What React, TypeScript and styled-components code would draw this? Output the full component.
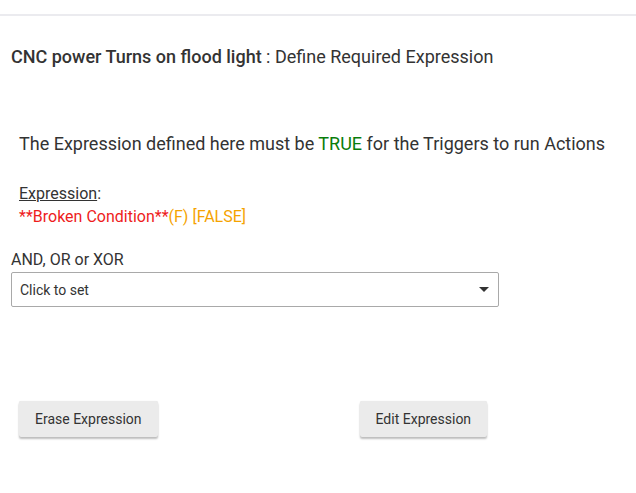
import styled, { createGlobalStyle } from "styled-components";

const GlobalStyle = createGlobalStyle`
    html, body {
        margin: 0;
        padding: 0;
        background: #ffffff;
        font-family: Roboto, "Liberation Sans", sans-serif;
        color: #333333;
    }
`;

export default function App() {
    return (
        <>
            <GlobalStyle />
            <Page>
                <TopRule />
                <Title>
                    <strong>CNC power Turns on flood light</strong> : Define Required Expression
                </Title>

                <Body>
                    <Intro>
                        The Expression defined here must be <Good>TRUE</Good> for the Triggers to run Actions
                    </Intro>

                    <ExpressionBlock>
                        <div>
                            <u>Expression</u>:
                        </div>
                        <div>
                            <Broken>**Broken Condition**</Broken>
                            <Warn>(F) [FALSE]</Warn>
                        </div>
                    </ExpressionBlock>
                </Body>

                <Field>
                    <label>AND, OR or XOR</label>
                    <Select>
                        <span>Click to set</span>
                        <svg width="10" height="5" viewBox="0 0 10 5">
                            <path d="M0 0 L10 0 L5 5 Z" fill="#333" />
                        </svg>
                    </Select>
                </Field>

                <Actions>
                    <Button>Erase Expression</Button>
                    <Button>Edit Expression</Button>
                </Actions>
            </Page>
        </>
    );
}

const Page = styled.main`
    width: 636px;
    min-height: 493px;
    box-sizing: border-box;
    padding-top: 14px;
`;

const TopRule = styled.div`
    height: 2px;
    background: #ebebef;
`;

const Title = styled.h1`
    margin: 0;
    padding: 30px 0 0 11px;
    font-size: 18px;
    line-height: 22px;
    font-weight: 400;
    color: #333;

    & strong {
        font-weight: 500;
    }
`;

const Body = styled.section`
    padding: 64px 0 0 19px;
`;

const Intro = styled.p`
    margin: 0;
    font-size: 18px;
    line-height: 24px;
    color: #333;
`;

const Good = styled.span`
    color: #0a7d0a;
`;

const ExpressionBlock = styled.div`
    margin-top: 26px;
    font-size: 16px;
    line-height: 23px;
    color: #333;
`;

const Broken = styled.span`
    color: #ee1c1c;
`;

const Warn = styled.span`
    color: #f5a300;
`;

const Field = styled.div`
    padding: 22px 0 0 11px;
    display: flex;
    flex-direction: column;
    gap: 2px;

    & label {
        font-size: 16px;
        line-height: 20px;
        color: #333;
    }
`;

const Select = styled.div`
    width: 488px;
    height: 35px;
    box-sizing: border-box;
    border: 1px solid #a9a9a9;
    border-radius: 2px;
    display: flex;
    align-items: center;
    justify-content: space-between;
    padding: 0 9px 0 8px;
    font-size: 14px;
    color: #333;
`;

const Actions = styled.div`
    padding: 94px 0 0 19px;
    display: flex;
    gap: 202px;
`;

const Button = styled.button`
    height: 36px;
    padding: 0 16px;
    border: none;
    border-radius: 2px;
    background: #ebebeb;
    color: #333;
    font-family: Roboto, "Liberation Sans", sans-serif;
    font-size: 14px;
    box-shadow: 0 2px 2px rgba(0, 0, 0, 0.25), 0 0 1px rgba(0, 0, 0, 0.12);
`;
